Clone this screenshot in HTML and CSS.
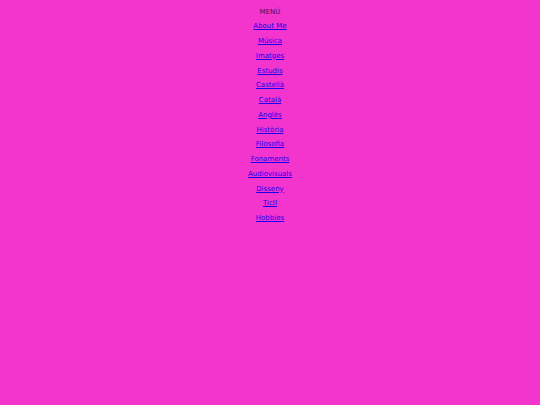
FILE: index.html
```html
<!DOCTYPE html>
<html>
<head>
<meta charset="utf-8">
<link rel="stylesheet" href="styles.css">
</head>
<body>
<nav class="menu">
  <div class="title">MENÚ</div>
  <a href="#">About Me</a>
  <a href="#">Música</a>
  <a href="#">Imatges</a>
  <a href="#">Estudis</a>
  <a href="#">Castellà</a>
  <a href="#">Català</a>
  <a href="#">Anglès</a>
  <a href="#">Història</a>
  <a href="#">Filosofia</a>
  <a href="#">Fonaments</a>
  <a href="#">Audiovisuals</a>
  <a href="#">Disseny</a>
  <a href="#">TicII</a>
  <a href="#">Hobbies</a>
</nav>
</body>
</html>
```
FILE: styles.css
```css
html, body {
  margin: 0;
  padding: 0;
  background: #f335ce;
  height: 100%;
}
body {
  font-family: "DejaVu Sans", Verdana, sans-serif;
  font-size: 7px;
}
.menu {
  display: flex;
  flex-direction: column;
  align-items: center;
  padding-top: 4.5px;
}
.menu .title,
.menu a {
  line-height: 14.75px;
}
.menu .title {
  color: #4a1050;
}
.menu a {
  color: #1a00ee;
  text-decoration: underline;
}
```
